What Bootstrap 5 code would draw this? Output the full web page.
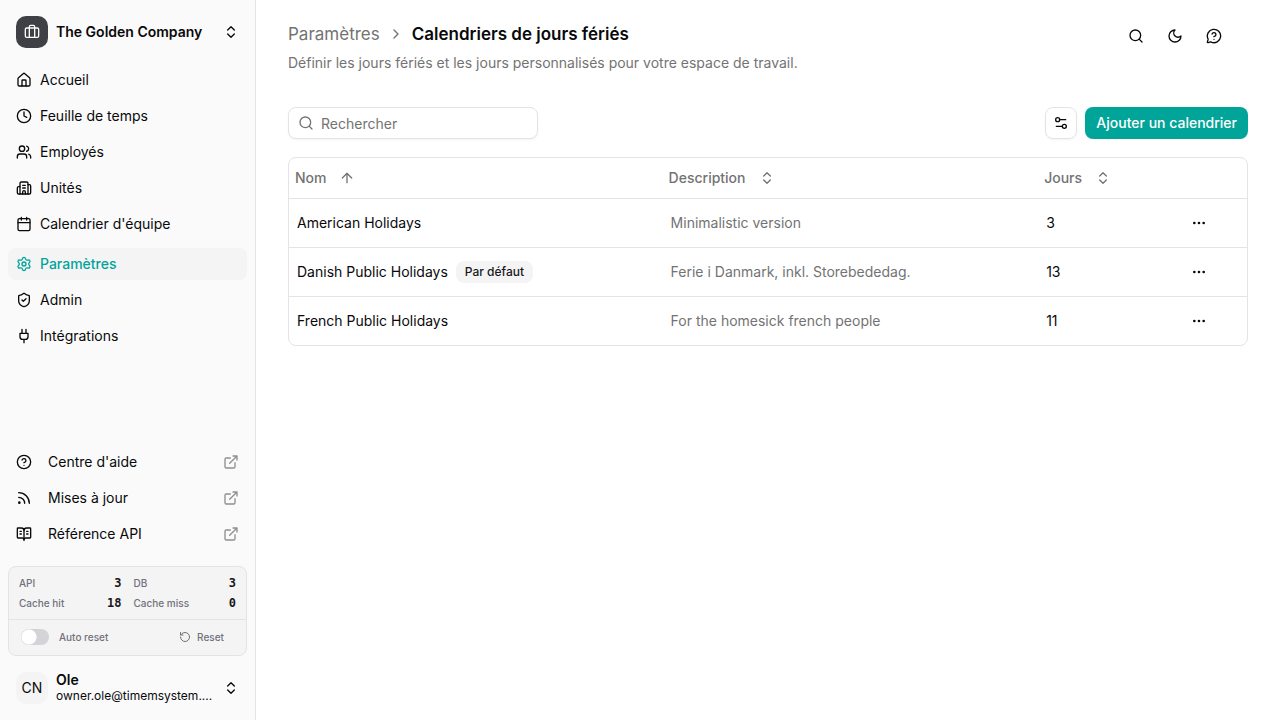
<!DOCTYPE html>
<html lang="fr">
<head>
<meta charset="utf-8">
<meta name="viewport" content="width=device-width, initial-scale=1">
<title>Calendriers de jours fériés</title>
<link href="https://cdn.jsdelivr.net/npm/bootstrap@5.3.0/dist/css/bootstrap.min.css" rel="stylesheet">
<style>
  :root { --ink: #09090b; --muted: #737373; --line: #e4e4e7; --accent: #00a499; --soft: #f4f4f5; }
  body { font-family: Inter, "Liberation Sans", sans-serif; font-size: 14px; line-height: 20px; color: var(--ink); background: #fff; }
  a { color: inherit; text-decoration: none; }
  .ico { width: 16px; height: 16px; flex: none; fill: none; stroke: currentColor; stroke-width: 2; stroke-linecap: round; stroke-linejoin: round; }
  .ico-sm { width: 12px; height: 12px; }
  .text-soft { color: var(--muted); }
  .sidebar { width: 256px; flex: none; background: #fafafa; border-right: 1px solid var(--line); height: 100vh; position: sticky; top: 0; }
  .side-row { border: 0; background: none; color: inherit; padding: 8px; text-align: left; }
  .avatar { width: 32px; height: 32px; border-radius: 10px; flex: none; }
  .avatar-org { background: #3f3f46; color: #fafafa; }
  .avatar-user { background: var(--soft); }
  .side-nav { gap: 4px; }
  .side-nav a { display: flex; align-items: center; gap: 8px; height: 32px; padding: 0 8px; border-radius: 8px; }
  .side-nav a.active { background: var(--soft); color: var(--accent); font-weight: 500; }
  .side-help a { gap: 16px; }
  .side-help .out { margin-left: auto; color: #8f8f8f; }
  .stats { background: var(--soft); border: 1px solid var(--line); border-radius: 8px; font-size: 10px; color: #71717a; font-weight: 500; }
  .stats-grid { display: grid; grid-template-columns: 1fr 1fr; column-gap: 12px; padding: 6px 10px; margin: 0; }
  .stats-grid dt { font-weight: 500; }
  .stats-grid dd { margin: 0; font: bold 12px/20px "DejaVu Sans Mono", monospace; color: #18181b; }
  .stats-foot { border-top: 1px solid var(--line); height: 36px; padding: 0 22px 2px 12px; }
  .stats-foot .form-check-input { width: 28px; height: 16px; margin: 0; border: 0; background-color: #d4d4d8; float: none; }
  .stats-foot .form-switch .form-check-input { background-image: radial-gradient(circle at 8px 8px, #fff 7px, transparent 8px); background-size: 28px 16px; background-position: left; }
  .stats-foot label { padding-left: 10px; }
  .stats-foot button { border: 0; background: none; color: inherit; padding: 0; font-weight: 500; gap: 6px; }
  .user-name { line-height: 16px; font-weight: 600; }
  .user-mail { font-size: 12px; line-height: 16px; }
  main { padding: 20px 32px; min-width: 0; }
  .crumb, .crumb h1 { font-size: 17px; line-height: 28px; }
  .crumb h1 { font-weight: 600; margin: 0; }
  .lede { line-height: 22px; margin: 4px 0 0; }
  .head-tools { gap: 7px; padding-right: 18px; }
  .toolbar { margin: 33px 0 18px; }
  .icon-btn { width: 32px; height: 32px; border: 0; border-radius: 8px; background: none; padding: 0; color: var(--ink); display: inline-flex; align-items: center; justify-content: center; }
  .outlined { border: 1px solid var(--line); box-shadow: 0 1px 2px rgba(0,0,0,.05); border-radius: 8px; }
  .search { width: 250px; height: 32px; padding: 0 9px; gap: 7px; color: var(--muted); background: #fff; }
  .search input { border: 0; outline: 0; padding: 1px 0 0; min-width: 0; flex: 1; background: none; line-height: 20px; }
  .search input::placeholder { color: var(--muted); opacity: 1; }
  .btn-accent { background: var(--accent); color: #fff; border: 0; border-radius: 8px; font-size: 14px; line-height: 20px; font-weight: 500; padding: 6px 11px; }
  .btn-accent:hover { background: #008f86; color: #fff; }
  .grid-box { border: 1px solid var(--line); border-radius: 8px; overflow: hidden; }
  .grid-box table { table-layout: fixed; }
  .grid-box th { height: 40px; padding: 0 6px; font-weight: 500; }
  .grid-box td { height: 49px; padding: 0 8px; border-top: 1px solid var(--line); }
  .grid-box th button { border: 0; background: none; padding: 0; color: var(--muted); font-weight: 500; gap: 13px; }
  .col-name { width: 39%; }
  .col-desc { width: 39.2%; }
  .col-days { width: 14.3%; }
  .tag { background: var(--soft); color: #18181b; border: 1px solid transparent; border-radius: 8px; font-size: 12px; line-height: 16px; font-weight: 500; padding: 2px 8px; }
</style>
</head>
<body>
<svg class="d-none" xmlns="http://www.w3.org/2000/svg">
  <symbol id="updown" viewBox="0 0 24 24"><path d="m7 15 5 5 5-5M7 9l5-5 5 5"/></symbol>
  <symbol id="search" viewBox="0 0 24 24"><circle cx="11" cy="11" r="8"/><path d="m21 21-4.3-4.3"/></symbol>
  <symbol id="out" viewBox="0 0 24 24"><path d="M15 3h6v6M10 14 21 3M18 13v6a2 2 0 0 1-2 2H5a2 2 0 0 1-2-2V8a2 2 0 0 1 2-2h6"/></symbol>
  <symbol id="dots" viewBox="0 0 24 24"><circle cx="12" cy="12" r="1"/><circle cx="19" cy="12" r="1"/><circle cx="5" cy="12" r="1"/></symbol>
</svg>
<div class="d-flex min-vh-100">
  <aside class="sidebar d-flex flex-column p-2">
    <button type="button" class="side-row d-flex align-items-center gap-2">
      <span class="avatar avatar-org d-flex align-items-center justify-content-center"><svg class="ico" viewBox="0 0 24 24"><path d="M16 20V4a2 2 0 0 0-2-2h-4a2 2 0 0 0-2 2v16"/><rect x="2" y="6" width="20" height="14" rx="2"/></svg></span>
      <span class="flex-grow-1 text-truncate fw-semibold">The Golden Company</span>
      <svg class="ico"><use href="#updown"/></svg>
    </button>
    <nav class="mt-2">
      <div class="side-nav d-flex flex-column">
        <a href="#"><svg class="ico" viewBox="0 0 24 24"><path d="M15 21v-8a1 1 0 0 0-1-1h-4a1 1 0 0 0-1 1v8"/><path d="M3 10a2 2 0 0 1 .709-1.528l7-6a2 2 0 0 1 2.582 0l7 6A2 2 0 0 1 21 10v9a2 2 0 0 1-2 2H5a2 2 0 0 1-2-2z"/></svg>Accueil</a>
        <a href="#"><svg class="ico" viewBox="0 0 24 24"><circle cx="12" cy="12" r="10"/><path d="M12 6v6l4 2"/></svg>Feuille de temps</a>
        <a href="#"><svg class="ico" viewBox="0 0 24 24"><path d="M16 21v-2a4 4 0 0 0-4-4H6a4 4 0 0 0-4 4v2"/><circle cx="9" cy="7" r="4"/><path d="M22 21v-2a4 4 0 0 0-3-3.870M16 3.130a4 4 0 0 1 0 7.750"/></svg>Employés</a>
        <a href="#"><svg class="ico" viewBox="0 0 24 24"><path d="M10 12h4M10 8h4M14 21v-3a2 2 0 0 0-4 0v3"/><path d="M6 10H4a2 2 0 0 0-2 2v7a2 2 0 0 0 2 2h16a2 2 0 0 0 2-2V9a2 2 0 0 0-2-2h-2"/><path d="M6 21V5a2 2 0 0 1 2-2h8a2 2 0 0 1 2 2v16"/></svg>Unités</a>
        <a href="#"><svg class="ico" viewBox="0 0 24 24"><path d="M8 2v4M16 2v4M3 10h18"/><rect x="3" y="4" width="18" height="18" rx="2"/></svg>Calendrier d'équipe</a>
      </div>
      <div class="side-nav d-flex flex-column mt-2">
        <a href="#" class="active" aria-current="page"><svg class="ico" viewBox="0 0 24 24"><path d="M9.671 4.136a2.34 2.34 0 0 1 4.659 0 2.34 2.34 0 0 0 3.319 1.915 2.34 2.34 0 0 1 2.33 4.033 2.34 2.34 0 0 0 0 3.831 2.34 2.34 0 0 1-2.33 4.033 2.34 2.34 0 0 0-3.319 1.915 2.34 2.34 0 0 1-4.659 0 2.34 2.34 0 0 0-3.32-1.915 2.34 2.34 0 0 1-2.33-4.033 2.34 2.34 0 0 0 0-3.831A2.34 2.34 0 0 1 6.35 6.051a2.34 2.34 0 0 0 3.319-1.915"/><circle cx="12" cy="12" r="3"/></svg>Paramètres</a>
        <a href="#"><svg class="ico" viewBox="0 0 24 24"><path d="M20 13c0 5-3.5 7.5-7.66 8.95a1 1 0 0 1-.67-.01C7.5 20.5 4 18 4 13V6a1 1 0 0 1 1-1c2 0 4.500-1.200 6.240-2.720a1.170 1.170 0 0 1 1.520 0C14.510 3.810 17 5 19 5a1 1 0 0 1 1 1z"/><path d="m9 12 2 2 4-4"/></svg>Admin</a>
        <a href="#"><svg class="ico" viewBox="0 0 24 24"><path d="M12 22v-5M9 8V2M15 8V2M18 8v5a4 4 0 0 1-4 4h-4a4 4 0 0 1-4-4V8Z"/></svg>Intégrations</a>
      </div>
    </nav>
    <nav class="side-nav side-help d-flex flex-column mt-auto">
      <a href="#"><svg class="ico" viewBox="0 0 24 24"><circle cx="12" cy="12" r="10"/><path d="M9.090 9a3 3 0 0 1 5.830 1c0 2-3 3-3 3M12 17h.01"/></svg>Centre d'aide<svg class="ico out"><use href="#out"/></svg></a>
      <a href="#"><svg class="ico" viewBox="0 0 24 24"><path d="M4 11a9 9 0 0 1 9 9M4 4a16 16 0 0 1 16 16"/><circle cx="5" cy="19" r="1"/></svg>Mises à jour<svg class="ico out"><use href="#out"/></svg></a>
      <a href="#"><svg class="ico" viewBox="0 0 24 24"><path d="M12 7v14M16 12h2M16 8h2M6 12h2M6 8h2"/><path d="M3 18a1 1 0 0 1-1-1V4a1 1 0 0 1 1-1h5a4 4 0 0 1 4 4 4 4 0 0 1 4-4h5a1 1 0 0 1 1 1v13a1 1 0 0 1-1 1h-6a3 3 0 0 0-3 3 3 3 0 0 0-3-3z"/></svg>Référence API<svg class="ico out"><use href="#out"/></svg></a>
    </nav>
    <section class="stats mt-3 mb-2">
      <dl class="stats-grid">
        <div class="d-flex justify-content-between"><dt>API</dt><dd>3</dd></div>
        <div class="d-flex justify-content-between"><dt>DB</dt><dd>3</dd></div>
        <div class="d-flex justify-content-between"><dt>Cache hit</dt><dd>18</dd></div>
        <div class="d-flex justify-content-between"><dt>Cache miss</dt><dd>0</dd></div>
      </dl>
      <div class="stats-foot d-flex align-items-center justify-content-between">
        <div class="form-switch d-flex align-items-center p-0">
          <input class="form-check-input" type="checkbox" role="switch" id="auto-reset">
          <label for="auto-reset">Auto reset</label>
        </div>
        <button type="button" class="d-flex align-items-center"><svg class="ico ico-sm" viewBox="0 0 24 24"><path d="M3 12a9 9 0 1 0 9-9 9.750 9.750 0 0 0-6.740 2.740L3 8"/><path d="M3 3v5h5"/></svg>Reset</button>
      </div>
    </section>
    <button type="button" class="side-row d-flex align-items-center gap-2">
      <span class="avatar avatar-user d-flex align-items-center justify-content-center">CN</span>
      <span class="flex-grow-1">
        <span class="d-block user-name">Ole</span>
        <span class="d-block user-mail">owner.ole@timemsystem....</span>
      </span>
      <svg class="ico"><use href="#updown"/></svg>
    </button>
  </aside>
  <main class="flex-grow-1">
    <header class="d-flex justify-content-between align-items-start">
      <div>
        <div class="crumb d-flex align-items-center gap-2">
          <a href="#" class="text-soft">Paramètres</a>
          <svg class="ico text-soft" viewBox="0 0 24 24"><path d="m9 18 6-6-6-6"/></svg>
          <h1>Calendriers de jours fériés</h1>
        </div>
        <p class="text-soft lede">Définir les jours fériés et les jours personnalisés pour votre espace de travail.</p>
      </div>
      <div class="head-tools d-flex">
        <button type="button" class="icon-btn" aria-label="Rechercher"><svg class="ico"><use href="#search"/></svg></button>
        <button type="button" class="icon-btn" aria-label="Thème"><svg class="ico" viewBox="0 0 24 24"><path d="M12 3a6 6 0 0 0 9 9 9 9 0 1 1-9-9Z"/></svg></button>
        <button type="button" class="icon-btn" aria-label="Aide"><svg class="ico" viewBox="0 0 24 24"><path d="M2.992 16.342a2 2 0 0 1 .094 1.167l-1.065 3.290a1 1 0 0 0 1.236 1.168l3.413-.998a2 2 0 0 1 1.099.092 10 10 0 1 0-4.777-4.719"/><path d="M9.090 9a3 3 0 0 1 5.830 1c0 2-3 3-3 3M12 17h.01"/></svg></button>
      </div>
    </header>
    <div class="toolbar d-flex align-items-center gap-2">
      <label class="search outlined d-flex align-items-center me-auto"><svg class="ico"><use href="#search"/></svg><input type="search" placeholder="Rechercher" aria-label="Rechercher"></label>
      <button type="button" class="icon-btn outlined" aria-label="Affichage"><svg class="ico" viewBox="0 0 24 24"><path d="M14 17H5M19 7h-9"/><circle cx="17" cy="17" r="3"/><circle cx="7" cy="7" r="3"/></svg></button>
      <button type="button" class="btn btn-accent">Ajouter un calendrier</button>
    </div>
    <div class="grid-box">
      <table class="w-100 align-middle">
        <colgroup><col class="col-name"><col class="col-desc"><col class="col-days"><col></colgroup>
        <thead>
          <tr>
            <th scope="col"><button type="button" class="d-flex align-items-center">Nom <svg class="ico" viewBox="0 0 24 24"><path d="m5 12 7-7 7 7M12 19V5"/></svg></button></th>
            <th scope="col"><button type="button" class="d-flex align-items-center">Description <svg class="ico"><use href="#updown"/></svg></button></th>
            <th scope="col"><button type="button" class="d-flex align-items-center">Jours <svg class="ico"><use href="#updown"/></svg></button></th>
            <th></th>
          </tr>
        </thead>
        <tbody>
          <tr><td>American Holidays</td><td class="text-soft">Minimalistic version</td><td>3</td><td><button type="button" class="icon-btn" aria-label="Actions"><svg class="ico"><use href="#dots"/></svg></button></td></tr>
          <tr><td><div class="d-flex align-items-center gap-2">Danish Public Holidays <span class="tag">Par défaut</span></div></td><td class="text-soft">Ferie i Danmark, inkl. Storebededag.</td><td>13</td><td><button type="button" class="icon-btn" aria-label="Actions"><svg class="ico"><use href="#dots"/></svg></button></td></tr>
          <tr><td>French Public Holidays</td><td class="text-soft">For the homesick french people</td><td>11</td><td><button type="button" class="icon-btn" aria-label="Actions"><svg class="ico"><use href="#dots"/></svg></button></td></tr>
        </tbody>
      </table>
    </div>
  </main>
</div>
<script src="https://cdn.jsdelivr.net/npm/bootstrap@5.3.0/dist/js/bootstrap.bundle.min.js"></script>
</body>
</html>
